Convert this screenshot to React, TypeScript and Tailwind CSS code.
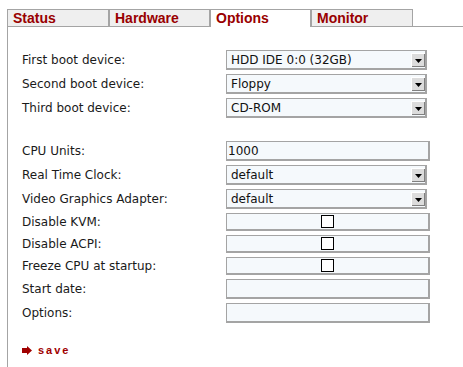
import React from "react";

const tabs = [
  { name: "Status", w: "w-[102px]", active: false },
  { name: "Hardware", w: "w-[101px]", active: false },
  { name: "Options", w: "w-[101px]", active: true },
  { name: "Monitor", w: "w-[102px]", active: false },
];

function Select({ value }: { value: string }) {
  return (
    <div className="relative flex h-[20px] w-[201px] items-center border-l border-t border-b-2 border-r-2 border-[#a4a4a4] bg-[#f5f9fc] pl-[4px] text-[12px] text-[#111]">
      <span className="leading-none">{value}</span>
      <div className="absolute right-[0px] top-[2px] flex h-[14px] w-[14px] items-center justify-center border-l border-t border-white bg-[#dcdcdc] shadow-[inset_-1px_-1px_0_#808080]">
        <svg width="7" height="4" viewBox="0 0 7 4">
          <polygon points="0,0 7,0 3.5,4" fill="#000" />
        </svg>
      </div>
    </div>
  );
}

function TextBox({ value }: { value?: string }) {
  return (
    <div className="flex h-[20px] w-[204px] items-center border-l border-t border-b-2 border-r-2 border-[#a4a4a4] bg-[#f5f9fc] pl-[1px] text-[12px] text-[#111]">
      <span className="leading-none">{value}</span>
    </div>
  );
}

function CheckBox() {
  return (
    <div className="flex h-[18px] w-[204px] items-center justify-center border-l border-t border-b-2 border-r-2 border-[#a4a4a4] bg-[#f5f9fc]">
      <div className="h-[13px] w-[13px] border border-black bg-white" />
    </div>
  );
}

function Row({ label, children }: { label: string; children: React.ReactNode }) {
  return (
    <div className="flex items-center">
      <div className="w-[204px] text-[12px] leading-none text-[#1a1a1a]">{label}</div>
      {children}
    </div>
  );
}

export default function App() {
  return (
    <div
      className="h-[367px] w-[463px] overflow-hidden bg-white pl-[7px] pt-[9px]"
      style={{ fontFamily: '"DejaVu Sans", Verdana, sans-serif' }}
    >
      <div className="flex items-end">
        {tabs.map((t) => (
          <div
            key={t.name}
            className={
              t.active
                ? `${t.w} h-[18px] border-l border-r border-t border-[#a4a4a4] bg-white pl-[5px]`
                : `${t.w} h-[18px] border border-[#a4a4a4] bg-[#efefef] pl-[5px]`
            }
          >
            <span
              className="block text-[14px] font-bold leading-[16px] text-[#990000]"
              style={{ fontFamily: '"Liberation Sans", Arial, sans-serif' }}
            >
              {t.name}
            </span>
          </div>
        ))}
        <div className="flex-1 border-b border-[#a4a4a4]" />
      </div>
      <div className="h-[400px] border-l border-[#a4a4a4] pl-[14px] pt-[23px]">
        <div className="flex flex-col gap-[4px]">
          <Row label="First boot device:">
            <Select value="HDD IDE 0:0 (32GB)" />
          </Row>
          <Row label="Second boot device:">
            <Select value="Floppy" />
          </Row>
          <Row label="Third boot device:">
            <Select value="CD-ROM" />
          </Row>
          <div className="h-[15px]" />
          <Row label="CPU Units:">
            <TextBox value="1000" />
          </Row>
          <Row label="Real Time Clock:">
            <Select value="default" />
          </Row>
          <Row label="Video Graphics Adapter:">
            <Select value="default" />
          </Row>
          <Row label="Disable KVM:">
            <CheckBox />
          </Row>
          <Row label="Disable ACPI:">
            <CheckBox />
          </Row>
          <Row label="Freeze CPU at startup:">
            <CheckBox />
          </Row>
          <Row label="Start date:">
            <TextBox />
          </Row>
          <Row label="Options:">
            <TextBox />
          </Row>
        </div>
        <div className="mt-[20px] flex h-[14px] items-center gap-[6px]">
          <svg width="10" height="9" viewBox="0 0 10 9">
            <polygon points="0,2 5,2 5,0 10,4.5 5,9 5,7 0,7" fill="#a00000" />
          </svg>
          <span
            className="text-[11px] font-bold leading-none tracking-[2px] text-[#a00000]"
            style={{ fontFamily: '"Liberation Sans", Arial, sans-serif' }}
          >
            save
          </span>
        </div>
      </div>
    </div>
  );
}
